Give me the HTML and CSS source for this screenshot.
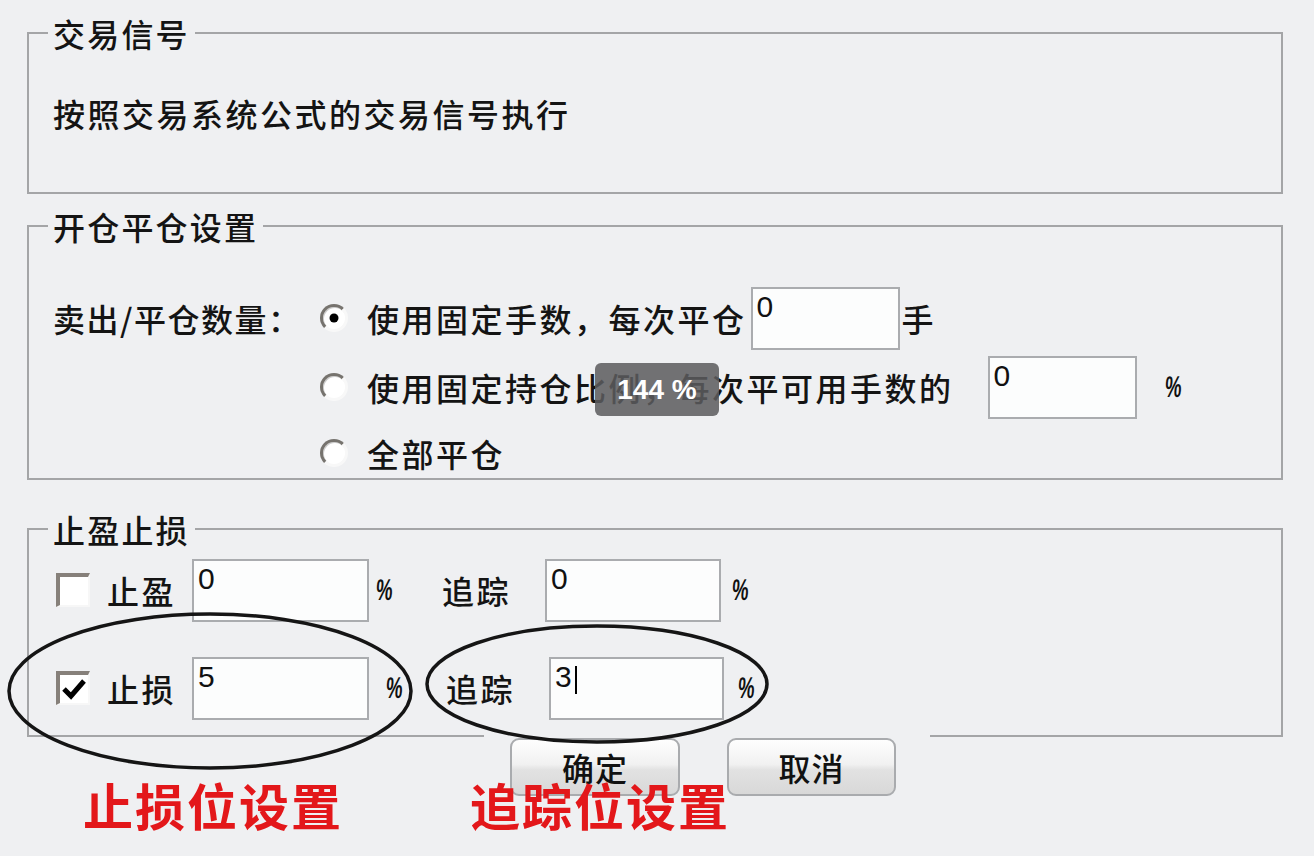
FILE: index.html
```html
<!DOCTYPE html>
<html lang="zh-CN">
<head>
<meta charset="utf-8">
<title>交易设置</title>
<link rel="stylesheet" href="styles.css">
</head>
<body>
<div class="dialog">
  <fieldset class="group g1">
    <legend>交易信号</legend>
    <p class="txt desc">按照交易系统公式的交易信号执行</p>
  </fieldset>

  <fieldset class="group g2">
    <legend>开仓平仓设置</legend>
    <div class="row r1">
      <span class="txt lbl">卖出/平仓数量：</span>
      <span class="radio on"></span>
      <span class="txt opt">使用固定手数，每次平仓</span>
      <span class="field f-hand">0</span>
      <span class="txt unit-hand">手</span>
    </div>
    <div class="row r2">
      <span class="radio indent"></span>
      <span class="txt opt">使用固定持仓比例，每次平可用手数的</span>
      <span class="field f-pct">0</span>
      <span class="pct p-ratio"><span class="pct-g">%</span></span>
    </div>
    <div class="row r3">
      <span class="radio indent"></span>
      <span class="txt opt">全部平仓</span>
    </div>
  </fieldset>

  <fieldset class="group g3">
    <legend>止盈止损</legend>
    <div class="row sr">
      <span class="check"></span>
      <span class="txt cklbl">止盈</span>
      <span class="field f-a">0</span>
      <span class="pct p-a1"><span class="pct-g">%</span></span>
      <span class="txt trk trk1">追踪</span>
      <span class="field f-b1">0</span>
      <span class="pct p-b1"><span class="pct-g">%</span></span>
    </div>
    <div class="row sr">
      <span class="check on">
        <svg viewBox="0 0 28 28" width="28" height="28"><path d="M4 14 L11 21 L24 6" fill="none" stroke="#000" stroke-width="5" stroke-linejoin="miter"/></svg>
      </span>
      <span class="txt cklbl">止损</span>
      <span class="field f-a">5</span>
      <span class="pct p-a2"><span class="pct-g">%</span></span>
      <span class="txt trk trk2">追踪</span>
      <span class="field f-b2">3<span class="caret"></span></span>
      <span class="pct p-b2"><span class="pct-g">%</span></span>
    </div>
  </fieldset>

  <div class="footer">
    <span class="rule rule-left"></span>
    <button class="btn btn-ok" type="button">确定</button>
    <button class="btn btn-cancel" type="button">取消</button>
    <span class="rule rule-right"></span>
  </div>

  <div class="notes">
    <span class="note n1">止损位设置</span>
    <span class="note n2">追踪位设置</span>
  </div>

  <div class="zoom-badge">144 %</div>

  <svg class="marks" viewBox="0 0 1314 856" width="1314" height="856">
    <ellipse cx="210" cy="691" rx="201" ry="77" fill="none" stroke="#151515" stroke-width="3.5"/>
    <ellipse cx="597" cy="684" rx="170" ry="58" fill="none" stroke="#151515" stroke-width="3.5"/>
  </svg>
</div>
</body>
</html>
```

FILE: styles.css
```css
html, body {
  margin: 0;
  padding: 0;
}

body {
  width: 1314px;
  height: 856px;
  overflow: hidden;
  background: #eff0f2;
  color: #141414;
  font-family: "Noto Sans CJK SC", "Noto Sans", sans-serif;
}

.dialog {
  position: relative;
  margin-left: 27px;
  width: 1256px;
  padding-top: 15px;
}

.group {
  margin: 0;
  padding: 0 24px;
  min-width: 0;
  border: 2px solid #a4a5a7;
}

.group legend {
  font-size: 32px;
  line-height: 36px;
  font-weight: 500;
  letter-spacing: 2.2px;
  padding: 0 5px;
  margin-left: -5px;
}

.txt {
  font-size: 32px;
  line-height: 36px;
  font-weight: 500;
  letter-spacing: 2.5px;
  white-space: nowrap;
  flex: none;
}

.desc {
  margin: 0;
}

.g1 {
  padding-top: 44px;
  padding-bottom: 61px;
}

.g2 {
  margin-top: 14px;
  padding-top: 40px;
  padding-bottom: 0;
}

.row {
  display: flex;
  align-items: center;
}

.r1 { height: 68px; }
.r2 { height: 70px; }
.r3 {
  height: 56px;
  padding-top: 6px;
  box-sizing: border-box;
}

.lbl {
  width: 267px;
  letter-spacing: 1.5px;
}

.radio {
  position: relative;
  flex: none;
  width: 28px;
  height: 28px;
  box-sizing: border-box;
  border-radius: 50%;
  border: 3px solid;
  border-color: #76736e #f8f8f8 #f8f8f8 #76736e;
  background: #fff;
  box-shadow: inset 1px 1px 0 #cfcfcf;
}

.radio.indent {
  margin-left: 267px;
}

.radio.on::after {
  content: "";
  position: absolute;
  left: 50%;
  top: 50%;
  width: 9px;
  height: 9px;
  border-radius: 50%;
  background: #000;
  transform: translate(-50%, -50%);
}

.opt {
  margin-left: 19px;
}

.field {
  flex: none;
  display: block;
  box-sizing: border-box;
  height: 63px;
  padding: 3px 4px;
  background: #fcfdfd;
  border: 2px solid #aaacaf;
  font-family: "Liberation Sans", Arial, sans-serif;
  font-size: 30px;
  line-height: 30px;
  color: #111;
}

.f-hand {
  width: 149px;
  margin-left: 4px;
}

.unit-hand {
  margin-left: 2px;
}

.f-pct {
  width: 149px;
  margin-left: 34px;
}

.pct {
  flex: none;
  display: flex;
  justify-content: center;
  align-items: center;
  width: 18px;
  height: 36px;
}

.pct-g {
  flex: none;
  display: block;
  font-family: "Liberation Sans", Arial, sans-serif;
  font-size: 30px;
  font-weight: bold;
  line-height: 36px;
  color: #111;
  transform: scaleX(0.62) skewX(-8deg);
}

.p-ratio { margin-left: 28px; }

.g3 {
  margin-top: 31px;
  padding-top: 11px;
  padding-bottom: 15px;
  border-bottom: none;
}

.sr {
  height: 64px;
}

.sr + .sr {
  margin-top: 34px;
}

.check {
  flex: none;
  display: flex;
  align-items: center;
  justify-content: center;
  width: 34px;
  height: 34px;
  margin-left: 3px;
  box-sizing: border-box;
  border-style: solid;
  border-width: 4px 2px 2px 4px;
  border-color: #86807a #f7f7f7 #f7f7f7 #86807a;
  background: #fff;
}

.check svg {
  display: block;
}

.cklbl {
  margin-left: 17px;
}

.f-a {
  width: 177px;
  margin-left: 16px;
}

.p-a1 { margin-left: 6px; }
.p-a2 { margin-left: 16px; }

.trk1 { margin-left: 49px; }
.trk2 { margin-left: 43px; }

.f-b1 {
  width: 176px;
  margin-left: 34px;
}

.f-b2 {
  width: 175px;
  margin-left: 34px;
}

.p-b1 { margin-left: 10px; }
.p-b2 { margin-left: 13px; }

.caret {
  display: inline-block;
  vertical-align: top;
  width: 2px;
  height: 28px;
  margin-top: 4px;
  margin-left: 3px;
  background: #000;
}

.footer {
  display: flex;
  align-items: flex-start;
}

.rule {
  flex: none;
  height: 2px;
  background: #a4a5a7;
}

.rule-left {
  width: 457px;
}

.rule-right {
  flex: 1;
  margin-left: 34px;
}

.btn {
  flex: none;
  height: 58px;
  margin-top: 3px;
  padding: 0;
  box-sizing: border-box;
  border: 2px solid #a9abae;
  border-radius: 9px;
  background: linear-gradient(#fefefe 0%, #f1f1f1 45%, #e2e2e2 55%, #d8d8d8 100%);
  font-family: "Noto Sans CJK SC", sans-serif;
  font-size: 32px;
  font-weight: 500;
  line-height: 36px;
  letter-spacing: 1px;
  color: #111;
}

.btn-ok {
  width: 170px;
  margin-left: 26px;
}

.btn-cancel {
  width: 169px;
  margin-left: 47px;
}

.notes {
  display: flex;
  margin-top: -22px;
}

.note {
  flex: none;
  font-size: 50px;
  line-height: 60px;
  font-weight: 700;
  letter-spacing: 2px;
  color: #e3171a;
  white-space: nowrap;
}

.n1 { margin-left: 56px; }
.n2 { margin-left: 127px; }

.zoom-badge {
  position: absolute;
  left: 568px;
  top: 363px;
  width: 124px;
  height: 53px;
  border-radius: 6px;
  background: rgba(92, 92, 94, 0.86);
  color: #fff;
  font-family: "Liberation Sans", Arial, sans-serif;
  font-size: 28px;
  font-weight: bold;
  line-height: 53px;
  text-align: center;
}

.marks {
  position: absolute;
  left: -27px;
  top: 0;
  pointer-events: none;
}
```
